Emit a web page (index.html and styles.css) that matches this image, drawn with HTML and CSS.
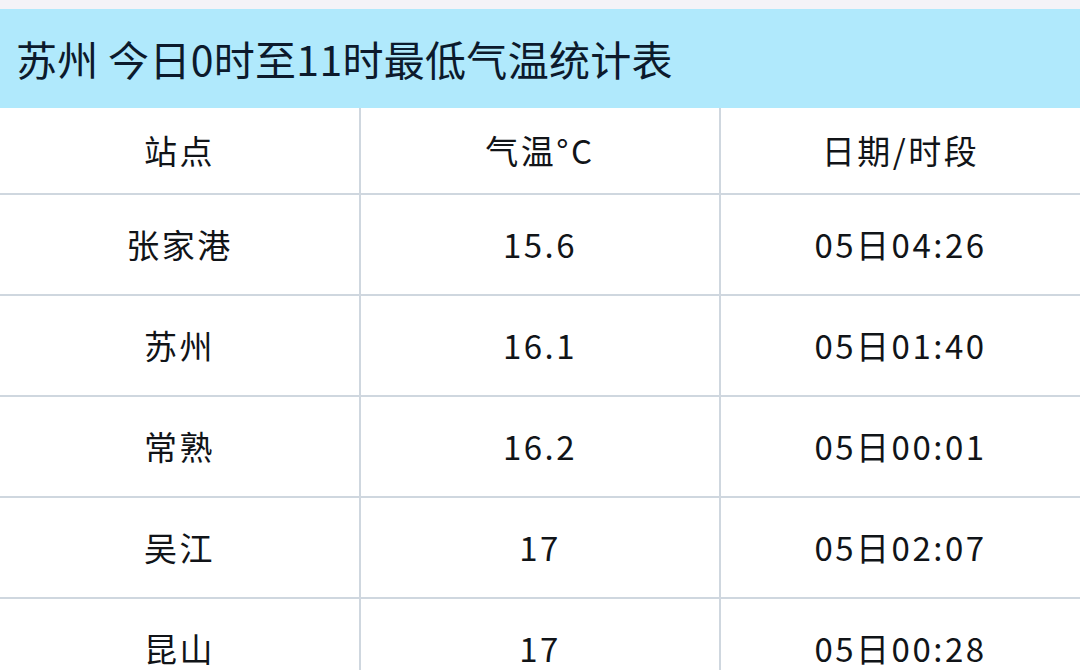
FILE: index.html
```html
<!DOCTYPE html>
<html lang="zh-CN">
<head>
<meta charset="utf-8">
<title>苏州 今日0时至11时最低气温统计表</title>
<link rel="stylesheet" href="styles.css">
</head>
<body>
<div class="topbar"></div>
<div class="title">苏州 今日0时至11时最低气温统计表</div>
<div class="table">
  <div class="row head">
    <div class="cell">站点</div>
    <div class="cell">气温°C</div>
    <div class="cell">日期/时段</div>
  </div>
  <div class="row">
    <div class="cell">张家港</div>
    <div class="cell">15.6</div>
    <div class="cell">05日04:26</div>
  </div>
  <div class="row">
    <div class="cell">苏州</div>
    <div class="cell">16.1</div>
    <div class="cell">05日01:40</div>
  </div>
  <div class="row">
    <div class="cell">常熟</div>
    <div class="cell">16.2</div>
    <div class="cell">05日00:01</div>
  </div>
  <div class="row">
    <div class="cell">吴江</div>
    <div class="cell">17</div>
    <div class="cell">05日02:07</div>
  </div>
  <div class="row">
    <div class="cell">昆山</div>
    <div class="cell">17</div>
    <div class="cell">05日00:28</div>
  </div>
</div>
</body>
</html>
```
FILE: styles.css
```css
html, body {
  margin: 0;
  padding: 0;
  background: #ffffff;
  width: 1080px;
  height: 670px;
  overflow: hidden;
  font-family: "Noto Sans CJK SC", "Noto Sans", sans-serif;
}

.topbar {
  height: 9px;
  background: #f4f3f7;
}

.title {
  height: 99px;
  background: #b0e9fc;
  display: flex;
  align-items: center;
  padding-left: 16px;
  font-size: 41px;
  letter-spacing: 0.3px;
  color: #0c1a2c;
  line-height: 1;
}

.table {
  display: flex;
  flex-direction: column;
}

.row {
  display: grid;
  grid-template-columns: 361px 360px 1fr;
  height: 99px;
  border-bottom: 2px solid #cfd7df;
}

.row.head {
  height: 85px;
}

.cell {
  display: flex;
  align-items: center;
  justify-content: center;
  font-size: 33px;
  letter-spacing: 2.5px;
  color: #111418;
  border-right: 2px solid #cfd7df;
  line-height: 1;
}

.cell:last-child {
  border-right: none;
}
```
